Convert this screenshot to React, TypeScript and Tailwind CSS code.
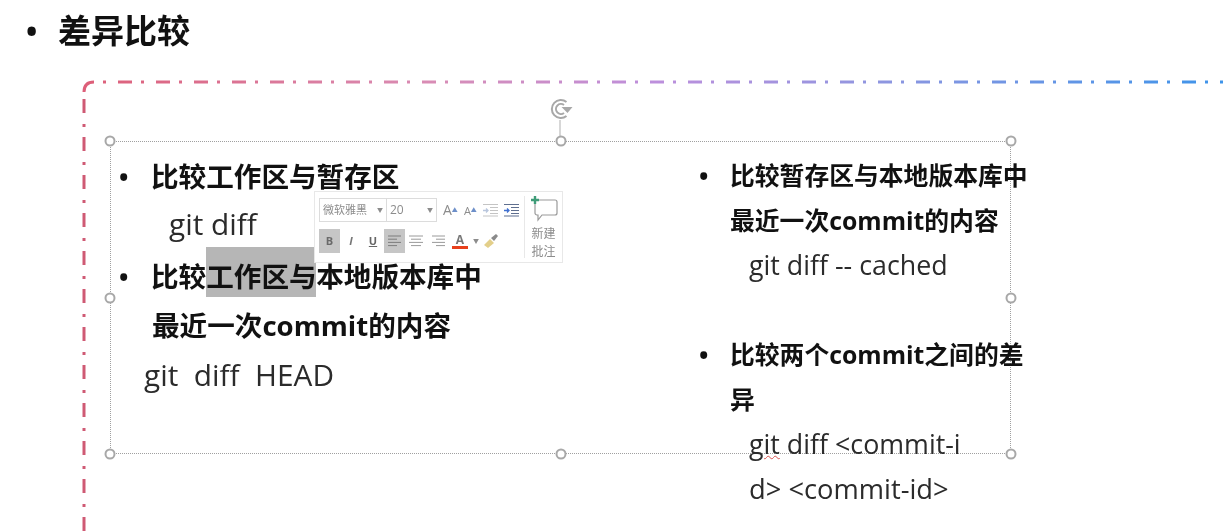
import React from "react";

const FONT = "font-['Open_Sans','Noto_Sans_CJK_SC',sans-serif]";

function Frame() {
  return (
    <svg className="absolute left-0 top-0" width="1223" height="532">
      <defs>
        <linearGradient id="fg" gradientUnits="userSpaceOnUse" x1="84" y1="0" x2="1223" y2="0">
          <stop offset="0" stopColor="#dd5f79" />
          <stop offset="0.3" stopColor="#d98cb4" />
          <stop offset="0.5" stopColor="#bd8fdc" />
          <stop offset="0.7" stopColor="#8e96e0" />
          <stop offset="1" stopColor="#3d94ea" />
        </linearGradient>
      </defs>
      <path d="M84 92 Q84 82 94 82" fill="none" stroke="#dd5f79" strokeWidth="3" />
      <path d="M103 82 H1223" fill="none" stroke="url(#fg)" strokeWidth="3" strokeDasharray="3 12 14 9" />
      <path d="M84 99 V532" fill="none" stroke="#cf5a74" strokeWidth="3" strokeDasharray="14 11 3 10" />
    </svg>
  );
}

function Handle({ cls }: { cls: string }) {
  return (
    <span
      className={`absolute h-[11px] w-[11px] -translate-x-1/2 -translate-y-1/2 rounded-full border-2 border-[#a8a8a8] bg-white ${cls}`}
    />
  );
}

function Rotate() {
  return (
    <div className="absolute left-[449px] top-[-44px] flex -translate-x-1/2 flex-col items-center">
      <svg width="26" height="22" viewBox="0 0 26 22" className="ml-[3px]">
        <path d="M18 4 A9 9 0 1 0 18 18" fill="none" stroke="#a8a8a8" strokeWidth="2" />
        <path d="M15.5 7 A5 5 0 1 0 15.5 15" fill="none" stroke="#a8a8a8" strokeWidth="2" />
        <path d="M13 9 H24 L19 15 Z" fill="#a8a8a8" />
      </svg>
      <span className="h-[22px] w-px bg-[#b0b0b0]" />
    </div>
  );
}

function Lines({ n, color, right }: { n: number[]; color: string; right?: boolean }) {
  return (
    <svg width="16" height="14" viewBox="0 0 16 14">
      {n.map((w, i) => (
        <path key={i} d={`M${right ? 16 - w : 1} ${2 + i * 3.2} h${w - 1}`} stroke={color} strokeWidth="1" />
      ))}
    </svg>
  );
}

function Indent({ blue }: { blue?: boolean }) {
  const c = blue ? "#5f6f8f" : "#c4c4c4";
  const a = blue ? "#3f6fd0" : "#b9c6dd";
  return (
    <svg width="17" height="14" viewBox="0 0 17 14">
      <path d="M1 1.5h15M8 4.5h8M8 7.5h8M8 10.5h8M1 13h15" stroke={c} strokeWidth="1" />
      <path d="M1 7.5h5M4 5.5l2 2-2 2" stroke={a} strokeWidth="1.3" fill="none" />
    </svg>
  );
}

function Toolbar() {
  return (
    <div className="absolute left-[203px] top-[49px] flex h-[72px] w-[249px] border border-[#e8e8e8] bg-white text-[#8c8c8c]">
      <div className="flex w-[209px] flex-col pl-[4px] pt-[6px]">
        <div className="flex h-[24px] items-center">
          <div className="flex h-[24px] w-[68px] items-center justify-between border border-[#dcdcdc] pl-[3px] pr-[3px] text-[11px]">
            <span>微软雅黑</span>
            <span className="text-[6px]">▼</span>
          </div>
          <div className="flex h-[24px] w-[50px] items-center justify-between border border-l-0 border-[#dcdcdc] pl-[3px] pr-[3px] text-[12px]">
            <span>20</span>
            <span className="text-[6px]">▼</span>
          </div>
          <span className="ml-[6px] text-[14px] leading-none">A<sup className="text-[6px] text-[#6d8fc9]">▲</sup></span>
          <span className="ml-[6px] text-[11px] leading-none">A<sup className="text-[6px] text-[#6d8fc9]">▲</sup></span>
          <span className="ml-[5px] flex"><Indent /></span>
          <span className="ml-[4px] flex"><Indent blue /></span>
        </div>
        <div className="mt-[7px] flex h-[24px] items-center">
          <span className="flex h-[24px] w-[21px] items-center justify-center bg-[#c6c6c6] text-[11px] font-bold text-[#6a6a6a]">B</span>
          <span className="flex h-[24px] w-[22px] items-center justify-center text-[11px] font-bold italic text-[#777]">I</span>
          <span className="flex h-[24px] w-[22px] items-center justify-center text-[11px] font-bold text-[#666] underline">U</span>
          <span className="flex h-[24px] w-[21px] items-center justify-center bg-[#c6c6c6]"><Lines n={[14, 10, 14, 10]} color="#7d7d7d" /></span>
          <span className="flex h-[24px] w-[22px] items-center justify-center"><svg width="16" height="14" viewBox="0 0 16 14"><path d="M1 2h14M3 5.2h10M1 8.4h14M3 11.6h10" stroke="#9a9a9a" strokeWidth="1" /></svg></span>
          <span className="flex h-[24px] w-[22px] items-center justify-center"><Lines n={[14, 10, 14, 10]} color="#9a9a9a" right /></span>
          <span className="flex h-[24px] w-[22px] flex-col items-center justify-center">
            <span className="text-[12px] font-bold leading-[13px] text-[#777]">A</span>
            <span className="h-[3px] w-[16px] bg-[#e8401c]" />
          </span>
          <span className="ml-[2px] text-[6px]">▼</span>
          <svg width="18" height="18" viewBox="0 0 18 18" className="ml-[3px]">
            <path d="M2 13 L8 7 L12 11 L6 16 Z" fill="#e3cf8a" />
            <path d="M9 6 L14 2 L16 4 L12 9 Z" fill="#8a8a8a" />
          </svg>
        </div>
      </div>
      <div className="my-[4px] w-px bg-[#e8e8e8]" />
      <div className="flex flex-1 flex-col items-center pt-[3px]">
        <svg width="28" height="28" viewBox="0 0 28 28">
          <path d="M7 5 H25 a2 2 0 0 1 2 2 V18 a2 2 0 0 1 -2 2 H12 L8 25 V20 H7 a2 2 0 0 1 -2 -2 V7 a2 2 0 0 1 2 -2 Z" fill="#fff" stroke="#9a9a9a" strokeWidth="1.2" />
          <path d="M1 5 h8 M5 1 v8" stroke="#3f9c78" strokeWidth="2.4" />
        </svg>
        <span className="mt-[2px] text-[12px] leading-[18px]">新建</span>
        <span className="text-[12px] leading-[18px]">批注</span>
      </div>
    </div>
  );
}

function Bullet({ children, cls, dotCls }: { children: React.ReactNode; cls: string; dotCls: string }) {
  return (
    <div className={`relative font-bold text-[#111] ${cls}`}>
      <span className={`absolute top-0 text-[25px] font-bold ${dotCls}`}>•</span>
      {children}
    </div>
  );
}

export default function App() {
  return (
    <div className={`relative h-[532px] w-[1223px] overflow-hidden bg-white blur-[0.5px] ${FONT}`}>
      <Frame />
      <div className="relative flex h-[61px] items-center pl-[26px] text-[#111]">
        <span className="w-[32px] text-[30px] font-bold leading-none">•</span>
        <span className="text-[33px] font-bold leading-none">差异比较</span>
      </div>
      <div className="relative ml-[110px] mt-[80px] h-[313px] w-[901px] border border-dotted border-[#a0a0a0]">
        <Rotate />
        <div className="absolute -inset-px">
          <Handle cls="left-0 top-0" />
          <Handle cls="left-1/2 top-0" />
          <Handle cls="left-full top-0" />
          <Handle cls="left-0 top-1/2" />
          <Handle cls="left-full top-1/2" />
          <Handle cls="left-0 top-full" />
          <Handle cls="left-1/2 top-full" />
          <Handle cls="left-full top-full" />
        </div>
        <div className="flex text-[#2b2b2b]">
          <div className="ml-[40px] mt-[9px] w-[578px] shrink-0 whitespace-nowrap text-[27.6px]">
            <Bullet cls="h-[48px] leading-[50px]" dotCls="left-[-32px] leading-[50px]">比较工作区与暂存区</Bullet>
            <div className="ml-[18px] h-[48px] text-[29.8px] leading-[50px]">git diff</div>
            <Bullet cls="h-[53px] leading-[58px]" dotCls="left-[-32px] leading-[58px]">
              比较<span className="inline-block h-[50px] w-[110px] bg-[#b6b6b6] align-top leading-[58px]">工作区与</span>本地版本库中
            </Bullet>
            <div className="ml-[1px] h-[50px] font-bold leading-[50px] text-[#111]">最近一次commit的内容</div>
            <div className="ml-[-7px] h-[50px] whitespace-pre text-[29.8px] leading-[50px]">git  diff  HEAD</div>
          </div>
          <div className="ml-[1px] mt-[11px] w-[300px] shrink-0 whitespace-nowrap text-[24.8px] leading-[44.8px]">
            <Bullet cls="" dotCls="left-[-31px] leading-[44.8px]">比较暂存区与本地版本库中</Bullet>
            <div className="font-bold text-[#111]">最近一次commit的内容</div>
            <div className="ml-[19px] text-[26.8px]">git diff -- cached</div>
            <div className="h-[45px]" />
            <Bullet cls="" dotCls="left-[-31px] leading-[44.8px]">比较两个commit之间的差</Bullet>
            <div className="font-bold text-[#111]">异</div>
            <div className="ml-[19px] text-[26.8px]">
              <span className="underline decoration-wavy decoration-[#d9534f] decoration-1">git</span> diff &lt;commit-i
            </div>
            <div className="ml-[19px] whitespace-pre text-[27.3px]">d&gt; &lt;commit-id&gt;</div>
          </div>
        </div>
        <Toolbar />
      </div>
    </div>
  );
}
